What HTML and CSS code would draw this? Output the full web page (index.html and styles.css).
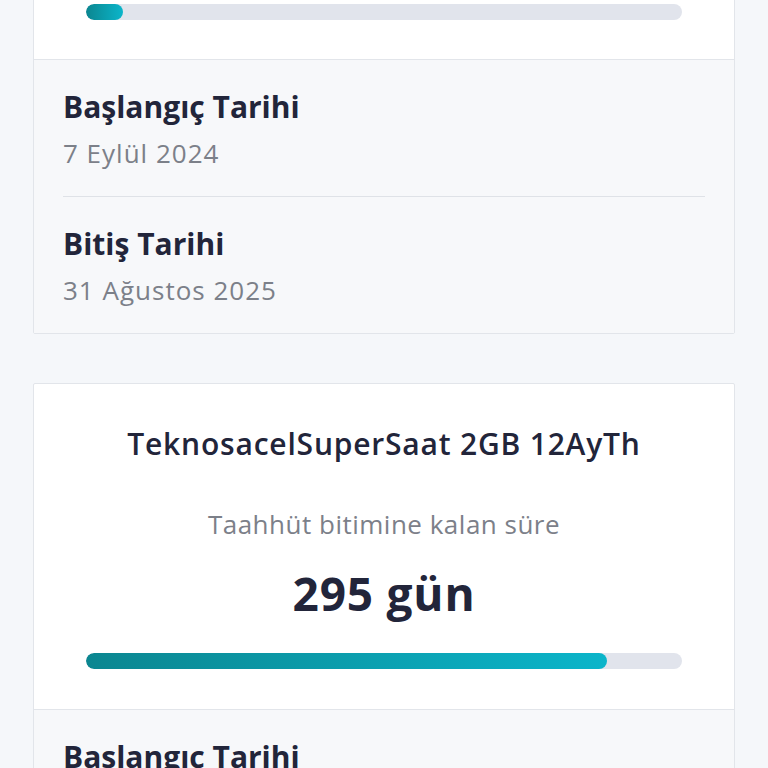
FILE: index.html
```html
<!DOCTYPE html>
<html lang="tr">
<head>
<meta charset="utf-8">
<link rel="stylesheet" href="styles.css">
</head>
<body>
<div class="page">
  <section class="card card-partial">
    <div class="summary">
      <div class="bar"><div class="fill" style="width:6.2%"></div></div>
    </div>
    <div class="details">
      <div class="item">
        <div class="label">Başlangıç Tarihi</div>
        <div class="value">7 Eylül 2024</div>
      </div>
      <div class="item">
        <div class="label">Bitiş Tarihi</div>
        <div class="value">31 Ağustos 2025</div>
      </div>
    </div>
  </section>
  <section class="card">
    <div class="summary">
      <h2 class="title">TeknosacelSuperSaat 2GB 12AyTh</h2>
      <p class="subtitle">Taahhüt bitimine kalan süre</p>
      <p class="days">295 gün</p>
      <div class="bar"><div class="fill" style="width:87.4%"></div></div>
    </div>
    <div class="details">
      <div class="item">
        <div class="label">Başlangıç Tarihi</div>
        <div class="value">7 Eylül 2024</div>
      </div>
      <div class="item">
        <div class="label">Bitiş Tarihi</div>
        <div class="value">31 Ağustos 2025</div>
      </div>
    </div>
  </section>
</div>
</body>
</html>
```

FILE: styles.css
```css
html, body {
  margin: 0;
  padding: 0;
  background: #f5f7fa;
  font-family: "Open Sans", "Noto Sans", sans-serif;
  color: #22253a;
}
.page {
  padding: 0 33px;
  display: flex;
  flex-direction: column;
  gap: 49px;
}
.card {
  background: #ffffff;
  border: 1px solid #e2e5ea;
  border-radius: 2px;
}
.card-partial {
  margin-top: -41px;
}
.summary {
  padding: 42px 52px 40px;
  display: flex;
  flex-direction: column;
  align-items: center;
  text-align: center;
}
.card-partial .summary {
  padding-top: 44px;
  padding-bottom: 39px;
}
.title {
  margin: 0;
  font-size: 30px;
  line-height: 36px;
  font-weight: 600;
  letter-spacing: 0.8px;
}
.subtitle {
  margin: 46px 0 0;
  font-size: 26px;
  line-height: 32px;
  color: #7c8089;
  letter-spacing: 0.5px;
}
.days {
  margin: 24px 0 0;
  font-size: 46px;
  line-height: 58px;
  font-weight: 700;
  letter-spacing: 0.8px;
}
.bar {
  align-self: stretch;
  height: 16px;
  border-radius: 8px;
  background: #e1e4ec;
  overflow: hidden;
  margin-top: 31px;
}
.card-partial .bar {
  margin-top: 0;
}
.fill {
  height: 100%;
  border-radius: 8px;
  background: linear-gradient(90deg, #0b8690, #0bb5ca);
}
.details {
  background: #f7f8fa;
  border-top: 1px solid #e2e5ea;
  padding: 0 29px;
}
.item {
  padding: 28px 0 27px;
}
.item + .item {
  border-top: 1px solid #dfe2e7;
}
.label {
  font-size: 30px;
  line-height: 38px;
  font-weight: 700;
}
.value {
  margin-top: 11px;
  font-size: 26px;
  line-height: 32px;
  color: #7c8089;
  letter-spacing: 1px;
}
```
